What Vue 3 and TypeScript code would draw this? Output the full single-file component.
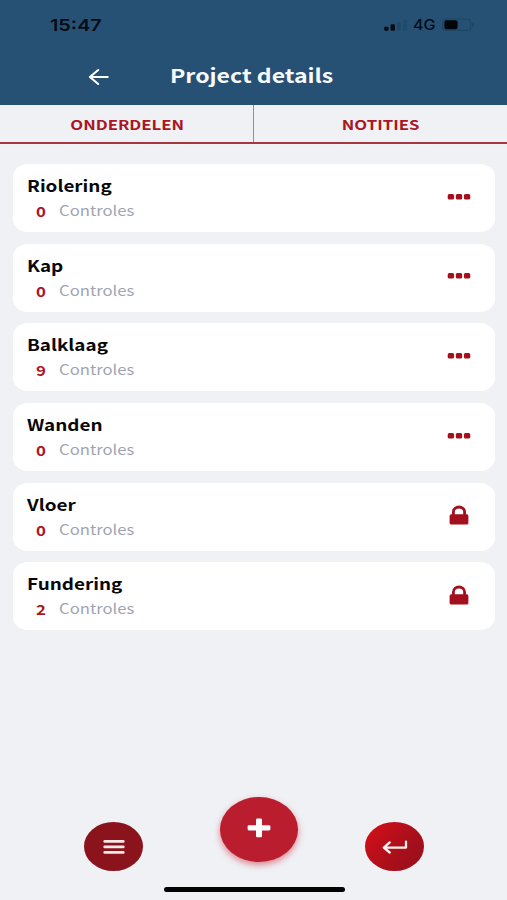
<script setup lang="ts">
interface Part {
  name: string
  checks: number
  locked: boolean
}

const parts: Part[] = [
  { name: 'Riolering', checks: 0, locked: false },
  { name: 'Kap', checks: 0, locked: false },
  { name: 'Balklaag', checks: 9, locked: false },
  { name: 'Wanden', checks: 0, locked: false },
  { name: 'Vloer', checks: 0, locked: true },
  { name: 'Fundering', checks: 2, locked: true },
]
</script>

<template>
  <div class="screen">
    <header class="top">
      <div class="status">
        <span class="time">15:47</span>
        <div class="indicators">
          <svg class="signal" width="24" height="12" viewBox="0 0 24 12">
            <rect x="0.2" y="7.7" width="4.3" height="4" rx="1" fill="#050b12" />
            <rect x="6.6" y="5.3" width="4.3" height="6.4" rx="1" fill="#050b12" />
            <rect x="13" y="3" width="3.8" height="8.7" rx="1" fill="#1f4a6b" />
            <rect x="19.3" y="0.5" width="3.8" height="11.2" rx="1" fill="#1f4a6b" />
          </svg>
          <span class="network">4G</span>
          <svg class="battery" width="33" height="14" viewBox="0 0 33 14">
            <rect x="0.7" y="1" width="28" height="11.4" rx="3.5" fill="none" stroke="#1d4565" stroke-width="1.2" />
            <rect x="2.4" y="2.2" width="13.2" height="9" rx="2" fill="#02060a" />
            <path d="M30 4.6c3 .8 3 3.4 0 4.2z" fill="#1d4565" />
          </svg>
        </div>
      </div>
      <div class="titlebar">
        <svg class="back" width="22" height="18" viewBox="0 0 22 18">
          <path d="M19.7 9H2M10.2 2L1.900 9l8.300 7" fill="none" stroke="#fff" stroke-width="2.100" stroke-linecap="round" stroke-linejoin="round" />
        </svg>
        <h1 class="title">Project details</h1>
      </div>
    </header>

    <nav class="tabs">
      <div class="tab"><span class="tab-text">ONDERDELEN</span></div>
      <div class="tab"><span class="tab-text">NOTITIES</span></div>
    </nav>

    <main class="list">
      <article v-for="part in parts" :key="part.name" class="card">
        <div class="info">
          <h2 class="name">{{ part.name }}</h2>
          <div class="meta">
            <span class="count">{{ part.checks }}</span>
            <span class="label">Controles</span>
          </div>
        </div>
        <svg v-if="part.locked" class="action" width="24" height="22" viewBox="0 0 24 22">
          <path d="M6.400 11V8C6.400 1.300 17.600 1.300 17.600 8V11" fill="none" stroke="#a3101d" stroke-width="2.800" />
          <rect x="2.600" y="10.300" width="18.800" height="10.300" rx="1.600" fill="#a3101d" />
        </svg>
        <svg v-else class="action" width="24" height="22" viewBox="0 0 24 22">
          <rect x="0.700" y="8.100" width="6.400" height="5.400" rx="1.600" fill="#a3101d" />
          <rect x="8.800" y="8.100" width="6.400" height="5.400" rx="1.600" fill="#a3101d" />
          <rect x="16.900" y="8.100" width="6.400" height="5.400" rx="1.600" fill="#a3101d" />
        </svg>
      </article>
    </main>

    <footer class="bottom">
      <div class="buttons">
        <button class="round menu" aria-label="Menu">
          <svg width="22" height="16" viewBox="0 0 22 16">
            <path d="M1.700 2.400h18.600M1.700 7.900h18.600M1.700 13.400h18.600" stroke="#fbe9ea" stroke-width="2.700" stroke-linecap="round" />
          </svg>
        </button>
        <button class="round add" aria-label="Toevoegen">
          <svg width="24" height="20" viewBox="0 0 24 20">
            <rect x="0.600" y="7.200" width="22.800" height="5.200" rx="1.300" fill="#fff" />
            <rect x="9" y="0.500" width="6" height="18.800" rx="1.300" fill="#fff" />
          </svg>
        </button>
        <button class="round return" aria-label="Terug">
          <svg width="26" height="14" viewBox="0 0 26 14">
            <path d="M24 1.700V7.600H2M7.700 2.400L1.800 7.600l5.900 4.900" fill="none" stroke="#fff0f0" stroke-width="2.300" stroke-linecap="round" stroke-linejoin="round" />
          </svg>
        </button>
      </div>
      <div class="home"></div>
    </footer>
  </div>
</template>

<style>
body {
  background: #eff1f5;
}
</style>

<style scoped>
.screen {
  box-sizing: border-box;
  width: 507px;
  height: 900px;
  display: flex;
  flex-direction: column;
  overflow: hidden;
  background: #eff1f5;
  font-family: "Noto Sans CJK SC", "Noto Sans", sans-serif;
}
.top {
  flex: none;
  height: 104.5px;
  background: #265174;
}
.status {
  height: 49px;
  padding: 0 32px 0 50px;
  display: flex;
  align-items: center;
  justify-content: space-between;
}
.time {
  font: 600 16.5px/20px Inter, sans-serif;
  color: #050b12;
  transform: scaleX(1.2);
  transform-origin: left;
}
.indicators {
  display: flex;
  align-items: center;
}
.network {
  width: 23px;
  margin: 0 6px 0 5.5px;
  font: 500 14px/18px Inter, sans-serif;
  color: #050b12;
  transform: scaleX(1.15);
  transform-origin: left;
}
.titlebar {
  height: 56px;
  display: flex;
  align-items: center;
  padding-left: 88px;
}
.back {
  margin-right: 60px;
}
.title {
  margin: 0;
  font-size: 19px;
  line-height: 28px;
  font-weight: 700;
  color: #f8fafc;
  white-space: nowrap;
  transform: translateY(-2px) scaleX(1.213);
  transform-origin: left;
}
.tabs {
  flex: none;
  box-sizing: border-box;
  height: 39px;
  display: grid;
  grid-template-columns: 254px 253px;
  border-bottom: 2px solid #a63540;
}
.tab {
  display: flex;
  align-items: center;
  justify-content: center;
}
.tab:first-child {
  box-sizing: border-box;
  border-right: 1px solid #cb7480;
}
.tab-text {
  font-size: 13.5px;
  line-height: 20px;
  font-weight: 700;
  color: #a91624;
  transform: translate(0.3px, 0.6px) scaleX(1.24);
}
.list {
  padding: 20.8px 12px 0 12.5px;
  display: flex;
  flex-direction: column;
  gap: 11.6px;
}
.card {
  box-sizing: border-box;
  height: 68px;
  padding: 0 24px 0 14px;
  display: flex;
  justify-content: space-between;
  background: #fff;
  border-radius: 15px / 13px;
}
.info {
  padding-top: 8px;
}
.name {
  margin: 0;
  font-size: 16px;
  line-height: 26px;
  font-weight: 700;
  color: #08080a;
  transform: scaleX(1.18);
  transform-origin: left;
}
.meta {
  display: flex;
  line-height: 24px;
}
.count {
  width: 32.5px;
  padding-left: 9px;
  box-sizing: border-box;
  font-size: 14px;
  font-weight: 700;
  color: #a91624;
  transform: translateY(1.2px) scaleX(1.2);
  transform-origin: 9px center;
}
.label {
  font-size: 14px;
  color: #9fa5b4;
  transform: scaleX(1.19);
  transform-origin: left;
}
.action {
  margin-top: 21.5px;
}
.bottom {
  margin-top: auto;
  display: flex;
  flex-direction: column;
  align-items: center;
}
.buttons {
  width: 340px;
  margin-left: 1px;
  display: flex;
  align-items: flex-end;
  justify-content: space-between;
}
.round {
  border: 0;
  padding: 0;
  width: 59px;
  height: 49px;
  border-radius: 50%;
  display: flex;
  align-items: center;
  justify-content: center;
}
.menu {
  background: #8b141c;
}
.add {
  width: 78px;
  height: 64.5px;
  margin: 0 0 9.5px 10px;
  padding-bottom: 3px;
  background: #ba1d2d;
  box-shadow: 0 3px 6px rgba(205, 25, 45, 0.5);
}
.return {
  background: linear-gradient(130deg, #cf0f19 10%, #a50f1b 65%, #980f1b 100%);
}
.home {
  width: 181px;
  height: 5px;
  margin: 16px 0 8px 1px;
  border-radius: 3px;
  background: #030303;
}
</style>
